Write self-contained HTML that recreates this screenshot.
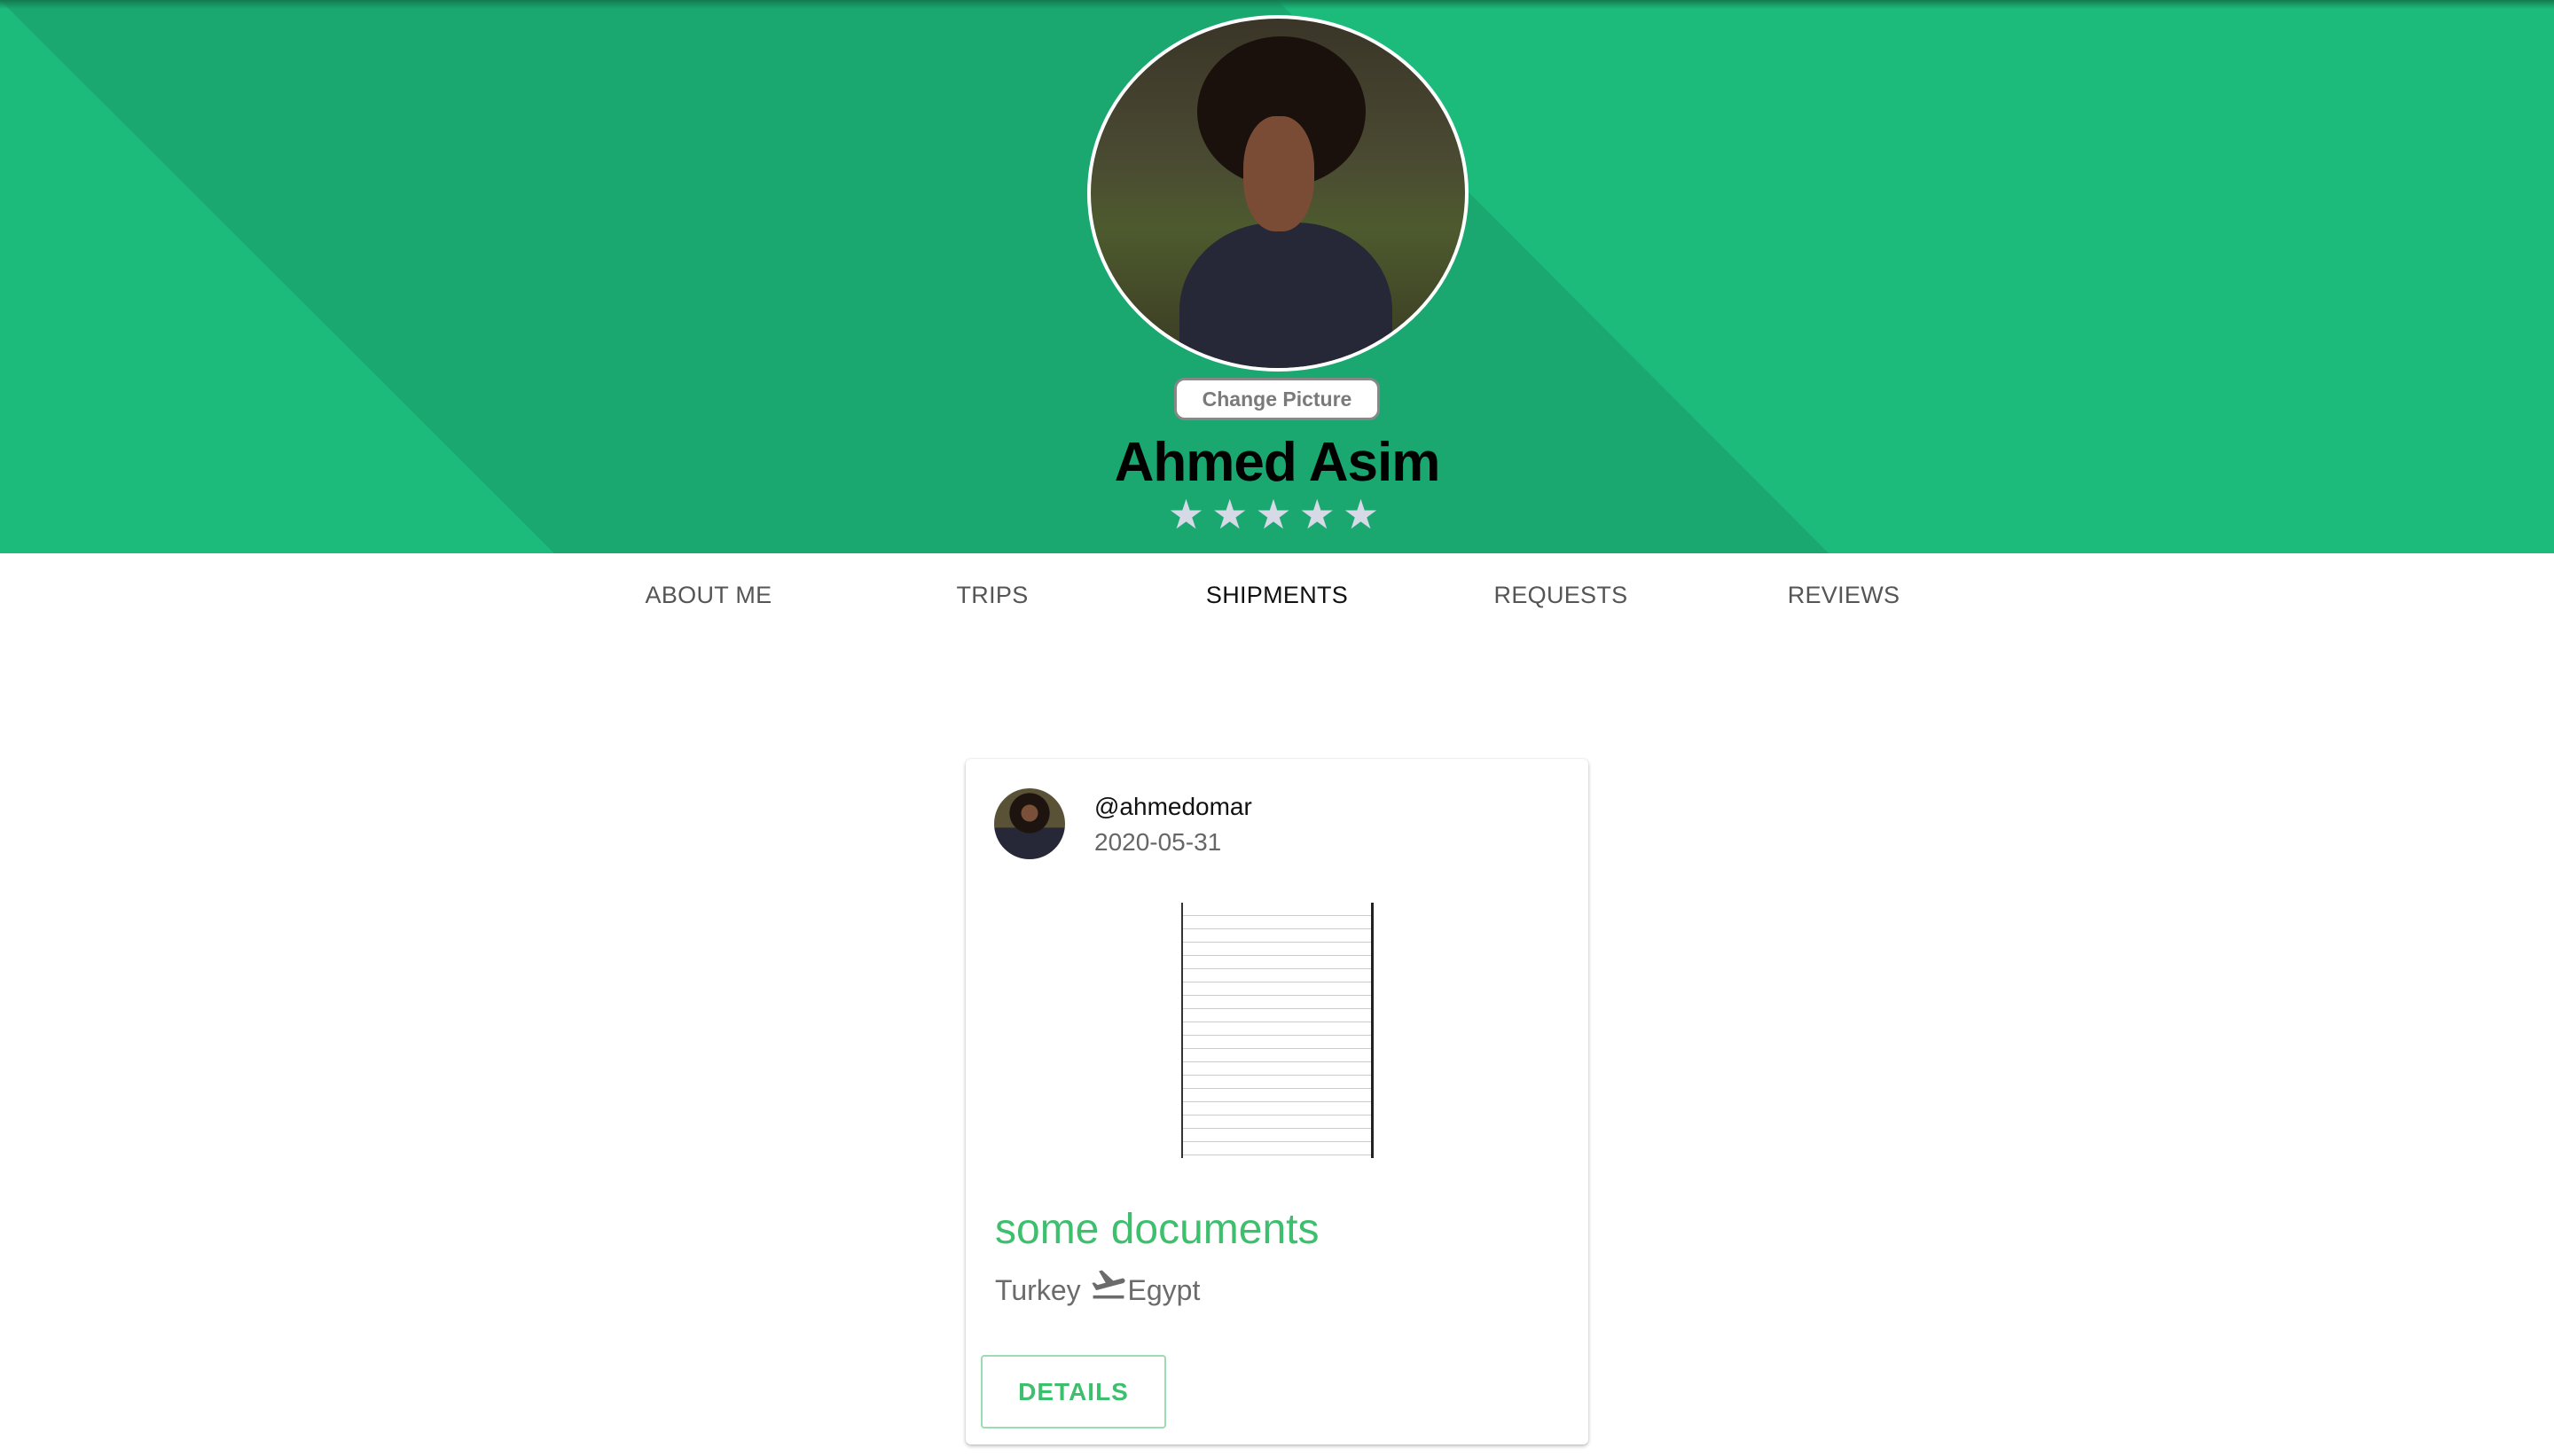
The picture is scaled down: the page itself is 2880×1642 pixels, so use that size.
<!DOCTYPE html>
<html><head><meta charset="utf-8"><style>
*{margin:0;padding:0;box-sizing:border-box}
body{width:2880px;height:1642px;background:#fff;font-family:"Liberation Sans",sans-serif;position:relative;overflow:hidden}
.hdr{position:absolute;left:0;top:0;width:2880px;height:624px;background:#1dbb7b;overflow:hidden}
.hdr svg.bg{position:absolute;left:0;top:0}
.shade{position:absolute;left:0;top:0;width:100%;height:10px;background:linear-gradient(#137a4f,rgba(26,168,112,0))}
.av{position:absolute;left:1226px;top:17px;width:430px;height:402px;border-radius:50%;border:4px solid #fff;overflow:hidden;background:linear-gradient(180deg,#3a3528 0%,#4a4a32 40%,#4d5a2e 60%,#3a3a22 100%)}
.av .shirt{position:absolute;left:100px;top:230px;width:240px;height:220px;border-radius:45% 45% 0 0;background:#262837}
.av .face{position:absolute;left:172px;top:110px;width:80px;height:130px;border-radius:45%;background:#7a4c36}
.av .hair{position:absolute;left:120px;top:20px;width:190px;height:170px;border-radius:50%;background:#1a110d}
.btn{position:absolute;left:1324px;top:426px;width:232px;height:48px;border:3px solid #888;border-radius:12px;background:#fff;color:#7a7a7a;font-weight:bold;font-size:23px;text-align:center;line-height:42px}
.name{position:absolute;left:0;width:2880px;top:486px;text-align:center;font-size:62px;font-weight:bold;color:#000;letter-spacing:-1px}
.stars{position:absolute;left:0;width:2880px;top:553px;text-align:center;font-size:46px;color:#d6d9e6;letter-spacing:8px}
.tab{position:absolute;top:656px;font-size:27px;color:#555;letter-spacing:0.3px;transform:translateX(-50%)}
.card{position:absolute;left:1089px;top:856px;width:702px;height:773px;background:#fff;border-radius:6px;box-shadow:0 2px 4px rgba(0,0,0,.25),0 0 2px rgba(0,0,0,.1)}
.sav{position:absolute;left:32px;top:33px;width:80px;height:80px;border-radius:50%;background:radial-gradient(circle at 50% 35%,#7a5038 0 14%,#1e140f 15% 34%,rgba(0,0,0,0) 35%),linear-gradient(#5a5236 0 55%,#262837 56%)}
.user{position:absolute;left:145px;top:38px;font-size:28px;color:#111}
.date{position:absolute;left:145px;top:78px;font-size:28px;color:#666}
.doc{position:absolute;left:243px;top:162px;width:217px;height:288px;background:repeating-linear-gradient(#fff 0 14px,#ccc 14px 15px);border-left:2px solid #333;border-right:3px solid #222}
.title{position:absolute;left:33px;top:503px;font-size:48px;color:#3dbf6e}
.route{position:absolute;left:33px;top:570px;font-size:32px;color:#6b6b6b;display:flex;align-items:flex-end}
.det{position:absolute;left:17px;top:672px;width:209px;height:83px;border:2px solid #9ddcb3;border-radius:4px;color:#3dbf6e;font-weight:bold;font-size:28px;letter-spacing:1px;text-align:center;line-height:79px}
</style></head><body>
<div class="hdr">
<svg class="bg" width="2880" height="624"><polygon points="0,0 1440,0 2062,624 625,624" fill="#1aa870"/></svg>
<div class="shade"></div>
</div>
<div class="av"><div class="hair"></div><div class="shirt"></div><div class="face"></div></div>
<div class="btn">Change Picture</div>
<div class="name">Ahmed Asim</div>
<div class="stars">★★★★★</div>
<div class="tab" style="left:799px">ABOUT ME</div>
<div class="tab" style="left:1119px">TRIPS</div>
<div class="tab" style="left:1440px;color:#111">SHIPMENTS</div>
<div class="tab" style="left:1760px">REQUESTS</div>
<div class="tab" style="left:2079px">REVIEWS</div>
<div class="card">
<div class="sav"></div>
<div class="user">@ahmedomar</div>
<div class="date">2020-05-31</div>
<div class="doc"></div>
<div class="title">some documents</div>
<div class="route"><span>Turkey&nbsp;</span><svg width="44" height="44" viewBox="0 0 24 24" style="margin-bottom:4px"><path fill="#6b6b6b" d="M2.5 19h19v2h-19zm19.57-9.36c-.21-.8-1.040-1.28-1.84-1.06L14.92 10l-6.9-6.43-1.93.51 4.14 7.17-4.97 1.33-1.970-1.54-1.45.39 1.82 3.16.77 1.33 1.6-.43 5.31-1.42 4.35-1.16L21 11.49c.81-.23 1.28-1.05 1.07-1.85z"/></svg><span>Egypt</span></div>
<div class="det">DETAILS</div>
</div>
</body></html>
